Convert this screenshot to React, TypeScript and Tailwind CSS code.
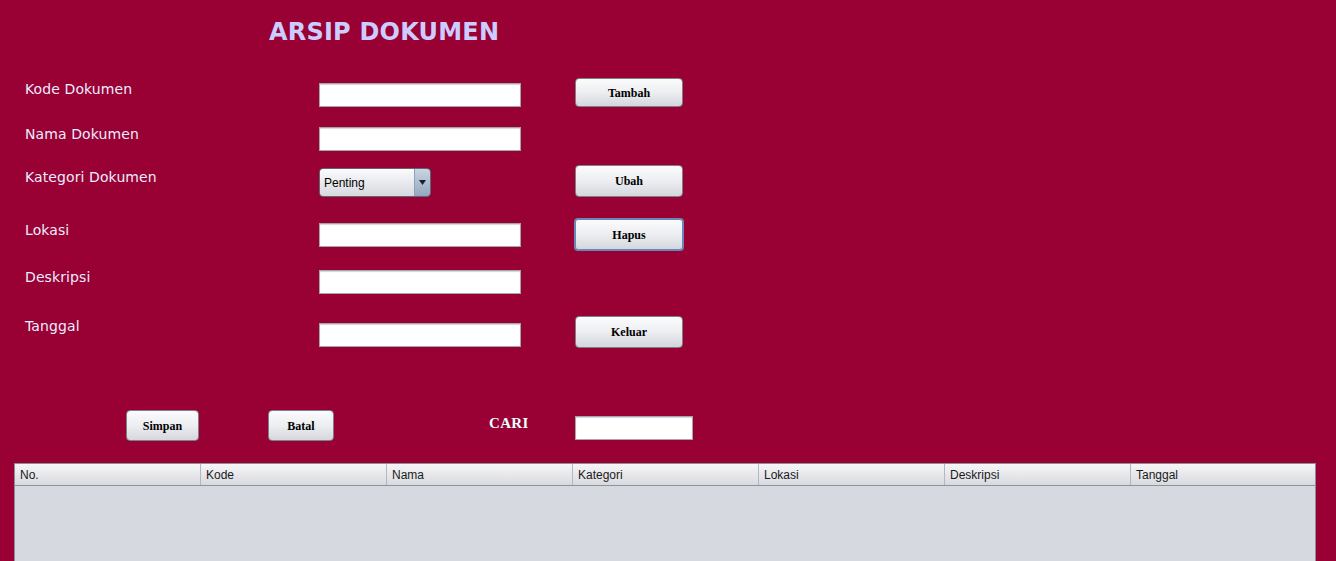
import React from 'react';

const labelCls = "w-[294px] shrink-0 text-[14px] leading-[17px] tracking-[0.1px] text-[#ececff] font-['DejaVu_Sans',sans-serif]";
const fieldCls = "w-[202px] h-[24px] shrink-0 bg-white border border-[#a3a6ad] shadow-[inset_0_1px_1px_#d4d6da]";

const Btn: React.FC<{ label: string; className?: string; focused?: boolean }> = ({ label, className = '', focused }) => (
    <button
        className={`shrink-0 rounded-[4px] bg-gradient-to-b from-[#fbfbfc] via-[#eceef1] to-[#d4d7dd] text-[12px] font-bold text-black font-['Liberation_Serif',serif] ${focused ? 'border-2 border-[#6b87b8]' : 'border border-[#7d8089]'} ${className}`}
    >
        {label}
    </button>
);

const columns = ['No.', 'Kode', 'Nama', 'Kategori', 'Lokasi', 'Deskripsi', 'Tanggal'];

export default function App() {
    return (
        <div className="w-[1336px] h-[561px] overflow-hidden bg-[#990033] flex flex-col">
            <div className="h-[78px] shrink-0 pl-[269px] pt-[18px]">
                <h1 className="text-[24px] leading-[28px] tracking-[0.2px] font-bold text-[#ccccff] font-['DejaVu_Sans',sans-serif]">ARSIP DOKUMEN</h1>
            </div>

            <div className="pl-[25px] flex flex-col">
                <div className="h-[47px] flex items-start">
                    <span className={`${labelCls} mt-[3px]`}>Kode Dokumen</span>
                    <div className={`${fieldCls} mt-[5px]`} />
                    <Btn label="Tambah" className="ml-[54px] w-[108px] h-[29px]" />
                </div>
                <div className="h-[40px] flex items-start">
                    <span className={`${labelCls} mt-[1px]`}>Nama Dokumen</span>
                    <div className={`${fieldCls} mt-[2px]`} />
                </div>
                <div className="h-[53px] flex items-start">
                    <span className={`${labelCls} mt-[4px]`}>Kategori Dokumen</span>
                    <div className="mt-[3px] w-[112px] h-[29px] shrink-0 flex rounded-[4px] border border-[#5e6673] overflow-hidden">
                        <div className="flex-1 flex items-center pl-[4px] bg-gradient-to-b from-[#fbfbfc] to-[#d6d9df] text-[12px] text-black font-['Liberation_Sans',sans-serif]">Penting</div>
                        <div className="w-[16px] flex items-center justify-center border-l border-[#8ea0b6] bg-gradient-to-b from-[#c9d5e2] to-[#93a8c0]">
                            <svg width="7" height="5" viewBox="0 0 7 5"><path d="M0 0h7L3.5 5z" fill="#1c1f26" /></svg>
                        </div>
                    </div>
                    <Btn label="Ubah" className="ml-[144px] w-[108px] h-[32px]" />
                </div>
                <div className="h-[50px] flex items-start">
                    <span className={`${labelCls} mt-[4px]`}>Lokasi</span>
                    <div className={`${fieldCls} mt-[5px]`} />
                    <Btn label="Hapus" focused className="ml-[53px] w-[110px] h-[33px]" />
                </div>
                <div className="h-[48px] flex items-start">
                    <span className={`${labelCls} mt-[1px]`}>Deskripsi</span>
                    <div className={`${fieldCls} mt-[2px]`} />
                </div>
                <div className="h-[94px] flex items-start">
                    <span className={`${labelCls} mt-[2px]`}>Tanggal</span>
                    <div className={`${fieldCls} mt-[7px]`} />
                    <Btn label="Keluar" className="ml-[54px] w-[108px] h-[32px]" />
                </div>
            </div>

            <div className="h-[53px] shrink-0 flex items-start pl-[126px]">
                <Btn label="Simpan" className="w-[73px] h-[31px]" />
                <Btn label="Batal" className="ml-[69px] w-[66px] h-[31px]" />
                <span className="ml-[155px] mt-[4px] text-[15px] leading-[18px] tracking-[0.3px] font-bold text-[#e6ffff] font-['Liberation_Serif',serif]">CARI</span>
                <div className="ml-[46px] mt-[6px] w-[118px] h-[24px] shrink-0 bg-white border border-[#a3a6ad] shadow-[inset_0_1px_1px_#d4d6da]" />
            </div>

            <div className="ml-[14px] w-[1302px] flex-1 flex flex-col border-t border-l border-r border-[#8b8f98] bg-[#d6d9df]">
                <div className="h-[22px] flex bg-gradient-to-b from-[#f6f6f8] to-[#d9dadf] border-b border-[#8f939c]">
                    {columns.map((c, i) => (
                        <div
                            key={c}
                            className={`h-full flex items-center pl-[5px] text-[12px] text-[#1a1a1a] font-['Liberation_Sans',sans-serif] ${i < columns.length - 1 ? 'w-[186px] border-r border-[#b3b7bf]' : 'flex-1'}`}
                        >
                            {c}
                        </div>
                    ))}
                </div>
            </div>
        </div>
    );
}
